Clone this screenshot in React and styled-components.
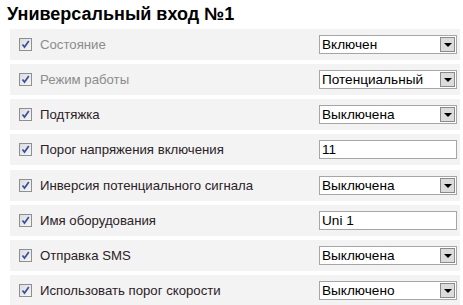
import React from "react";
import styled, { createGlobalStyle } from "styled-components";

const Global = createGlobalStyle`
  html, body { margin: 0; padding: 0; background: #fff; }
  body { font-family: "Liberation Sans", Arial, sans-serif; }
`;

const Page = styled.div`
  width: 463px;
  padding: 4px 0 0 0;
  box-sizing: border-box;
`;

const Title = styled.h1`
  margin: 0 0 5px 7px;
  font-size: 18px;
  line-height: 20px;
  font-weight: bold;
  color: #000;
`;

const List = styled.div`
  display: flex;
  flex-direction: column;
  gap: 4.14px;
  margin-left: 10px;
  width: 450px;
`;

const Row = styled.div`
  display: flex;
  align-items: center;
  height: 31px;
  background: #f3f3f3;
  padding: 0 3px 0 9px;
  box-sizing: border-box;
`;

const Check = styled.span`
  width: 13px;
  height: 13px;
  box-sizing: border-box;
  border: 1px solid #8e8f8f;
  background: linear-gradient(135deg, #dcdde0 0%, #f6f6f7 100%);
  display: flex;
  align-items: center;
  justify-content: center;
  flex: none;
`;

const Label = styled.span`
  margin-left: 8px;
  font-size: 13.2px;
  color: ${(p) => (p.$disabled ? "#8c8c8c" : "#2a2226")};
`;

const Control = styled.div`
  margin-left: auto;
  width: 138px;
  height: 19px;
  box-sizing: border-box;
  border: 1px solid #a6a6a6;
  background: #fff;
  display: flex;
  align-items: center;
  font-size: 13.6px;
  color: #000;
`;

const Value = styled.span`
  flex: 1;
  padding-left: 2px;
  white-space: nowrap;
  overflow: hidden;
`;

const Arrow = styled.span`
  width: 15px;
  height: 15px;
  margin-right: 1px;
  box-sizing: border-box;
  border: 1px solid #8a8a8a;
  background: #dcdcdc;
  display: flex;
  align-items: center;
  justify-content: center;
  flex: none;
`;

const Tri = styled.span`
  width: 0;
  height: 0;
  border-left: 4px solid transparent;
  border-right: 4px solid transparent;
  border-top: 4px solid #000;
  margin-top: 1px;
`;

const rows = [
  { label: "Состояние", value: "Включен", type: "select", disabled: true },
  { label: "Режим работы", value: "Потенциальный", type: "select", disabled: true },
  { label: "Подтяжка", value: "Выключена", type: "select" },
  { label: "Порог напряжения включения", value: "11", type: "input" },
  { label: "Инверсия потенциального сигнала", value: "Выключена", type: "select" },
  { label: "Имя оборудования", value: "Uni 1", type: "input" },
  { label: "Отправка SMS", value: "Выключена", type: "select" },
  { label: "Использовать порог скорости", value: "Выключено", type: "select" },
];

const CheckMark = () => (
  <svg width="9" height="9" viewBox="0 0 9 9">
    <path d="M1.5 4.5 L3.5 7 L7.8 1" fill="none" stroke="#3b4d9c" strokeWidth="1.7" />
  </svg>
);

export default function App() {
  return (
    <>
      <Global />
      <Page>
        <Title>Универсальный вход №1</Title>
        <List>
          {rows.map((r) => (
            <Row key={r.label}>
              <Check>
                <CheckMark />
              </Check>
              <Label $disabled={r.disabled}>{r.label}</Label>
              <Control>
                <Value>{r.value}</Value>
                {r.type === "select" && (
                  <Arrow>
                    <Tri />
                  </Arrow>
                )}
              </Control>
            </Row>
          ))}
        </List>
      </Page>
    </>
  );
}
